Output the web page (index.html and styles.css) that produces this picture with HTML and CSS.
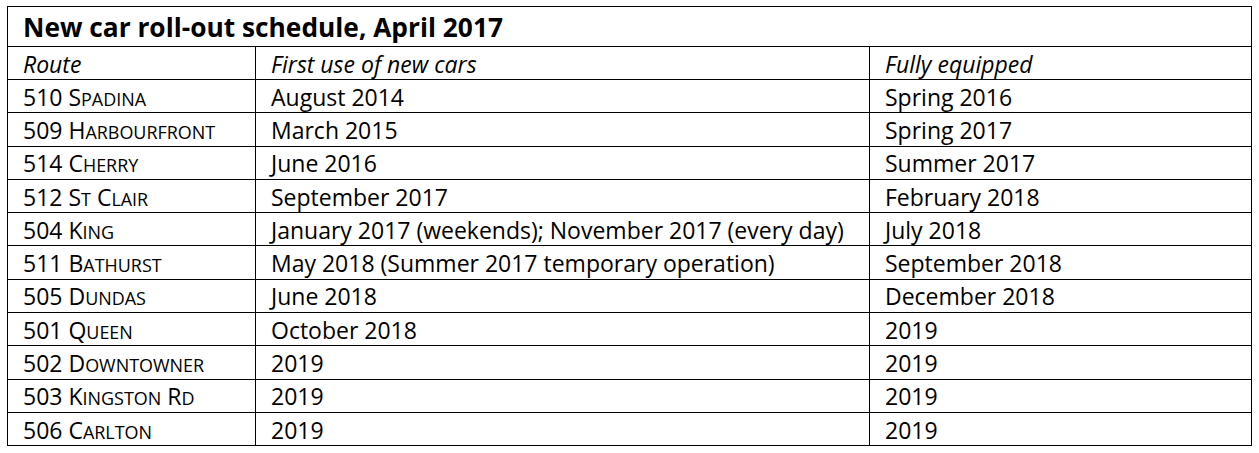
FILE: index.html
```html
<!DOCTYPE html>
<html>
<head>
<meta charset="utf-8">
<link rel="stylesheet" href="styles.css">
</head>
<body>
<table class="schedule">
  <colgroup>
    <col class="c-route">
    <col class="c-first">
    <col class="c-full">
  </colgroup>
  <thead>
    <tr class="title-row"><th colspan="3">New car roll-out schedule, April 2017</th></tr>
    <tr class="head-row"><th>Route</th><th>First use of new cars</th><th>Fully equipped</th></tr>
  </thead>
  <tbody>
    <tr><td>510 S<span class="sc">padina</span></td><td>August 2014</td><td>Spring 2016</td></tr>
    <tr><td>509 H<span class="sc">arbourfront</span></td><td>March 2015</td><td>Spring 2017</td></tr>
    <tr><td>514 C<span class="sc">herry</span></td><td>June 2016</td><td>Summer 2017</td></tr>
    <tr><td>512 S<span class="sc">t</span> C<span class="sc">lair</span></td><td>September 2017</td><td>February 2018</td></tr>
    <tr><td>504 K<span class="sc">ing</span></td><td>January 2017 (weekends); November 2017 (every day)</td><td>July 2018</td></tr>
    <tr><td>511 B<span class="sc">athurst</span></td><td>May 2018 (Summer 2017 temporary operation)</td><td>September 2018</td></tr>
    <tr><td>505 D<span class="sc">undas</span></td><td>June 2018</td><td>December 2018</td></tr>
    <tr><td>501 Q<span class="sc">ueen</span></td><td>October 2018</td><td>2019</td></tr>
    <tr><td>502 D<span class="sc">owntowner</span></td><td>2019</td><td>2019</td></tr>
    <tr><td>503 K<span class="sc">ingston</span> R<span class="sc">d</span></td><td>2019</td><td>2019</td></tr>
    <tr><td>506 C<span class="sc">arlton</span></td><td>2019</td><td>2019</td></tr>
  </tbody>
</table>
</body>
</html>
```
FILE: styles.css
```css
html, body {
  background: #ffffff;
}
body {
  margin: 6px 0 0 7px;
  font-family: "Open Sans", "Noto Sans", sans-serif;
  color: #000000;
}
.schedule {
  border-collapse: collapse;
  table-layout: fixed;
  width: 1244px;
}
.c-route { width: 248px; }
.c-first { width: 614px; }
.c-full { width: 382px; }
.schedule th,
.schedule td {
  border: 1px solid #000;
  padding: 2px 0 0 15px;
  text-align: left;
  white-space: nowrap;
  overflow: hidden;
  line-height: 1;
}
.title-row th {
  height: 37px;
  font-size: 26.3px;
  font-weight: bold;
  vertical-align: middle;
}
.head-row th {
  height: 30px;
  font-size: 23px;
  font-weight: normal;
  font-style: italic;
}
.schedule td {
  height: 30.3px;
  font-size: 23px;
}
.sc {
  text-transform: uppercase;
  font-size: 0.78em;
}
```
